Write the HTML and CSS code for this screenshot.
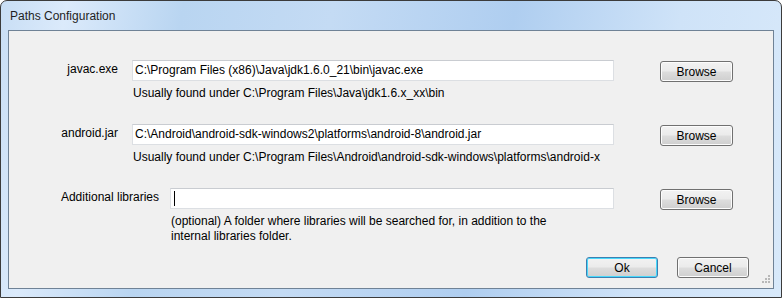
FILE: index.html
```html
<!DOCTYPE html>
<html lang="en">
<head>
    <meta charset="UTF-8">
    <title>Paths Configuration</title>
    <link rel="stylesheet" href="styles.css">
</head>
<body>

<!-- Dialog window -->
<div class="window">
    <div class="titlebar">Paths Configuration</div>

    <div class="client">
        <div class="row first">
            <div class="label">javac.exe</div>
            <div class="field">
                <div class="textbox">C:\Program Files (x86)\Java\jdk1.6.0_21\bin\javac.exe</div>
                <div class="hint">Usually found under C:\Program Files\Java\jdk1.6.x_xx\bin</div>
            </div>
            <button class="btn browse">Browse</button>
        </div>

        <div class="row">
            <div class="label">android.jar</div>
            <div class="field">
                <div class="textbox">C:\Android\android-sdk-windows2\platforms\android-8\android.jar</div>
                <div class="hint">Usually found under C:\Program Files\Android\android-sdk-windows\platforms\android-x</div>
            </div>
            <button class="btn browse">Browse</button>
        </div>

        <div class="row libs">
            <div class="label">Additional libraries</div>
            <div class="field">
                <div class="textbox"><span class="caret"></span></div>
                <div class="hint">(optional) A folder where libraries will be searched for, in addition to the<br>internal libraries folder.</div>
            </div>
            <button class="btn browse">Browse</button>
        </div>

        <div class="actions">
            <button class="btn default">Ok</button>
            <button class="btn">Cancel</button>
        </div>

        <svg class="grip" width="11" height="11" viewBox="0 0 11 11">
            <g fill="#b8b8b8">
                <rect x="8" y="0" width="2" height="2"/>
                <rect x="5" y="3" width="2" height="2"/>
                <rect x="8" y="3" width="2" height="2"/>
                <rect x="2" y="6" width="2" height="2"/>
                <rect x="5" y="6" width="2" height="2"/>
                <rect x="8" y="6" width="2" height="2"/>
            </g>
        </svg>
    </div>
</div>

</body>
</html>
```

FILE: styles.css
```css
/* Page */
body {
    margin: 0;
    background: #ffffff;
    font-family: "Liberation Sans", Arial, sans-serif;
    font-size: 12px;
    color: #000;
}

/* Window frame */
.window {
    width: 782px;
    height: 298px;
    box-sizing: border-box;
    border: 1px solid #3b3b3b;
    border-radius: 7px 7px 0 0;
    background: linear-gradient(100deg, #c8def5 0%, #dbeafb 8%, #b9d5f1 22%, #c4dbf4 40%, #afcef0 62%, #cfe3f8 82%, #d8e9fa 100%);
    padding: 0 7px 7px 7px;
}

.titlebar {
    height: 29px;
    line-height: 30px;
    padding-left: 2px;
    font-size: 12px;
    color: #1e1e1e;
}

.client {
    position: relative;
    height: 259px;
    box-sizing: border-box;
    border: 1px solid #6f8296;
    background: #f0f0f0;
}

/* Form rows */
.row {
    display: flex;
    align-items: flex-start;
    margin-top: 23px;
}

.row.first {
    margin-top: 29px;
}

.label {
    width: 109px;
    margin-right: 14px;
    text-align: right;
    line-height: 15px;
    padding-top: 2px;
}

.row.libs .label {
    width: 150px;
    margin-right: 11px;
}

.field {
    width: 482px;
}

.row.libs .field {
    width: 444px;
}

.textbox {
    height: 21px;
    box-sizing: border-box;
    background: #fff;
    border: 1px solid #dcdfe3;
    border-top-color: #c9ccd1;
    padding: 0 2px;
    line-height: 19px;
    white-space: nowrap;
    overflow: hidden;
}

.caret {
    display: inline-block;
    width: 1px;
    height: 15px;
    margin-left: 1px;
    margin-top: 2px;
    background: #000;
    vertical-align: top;
}

.hint {
    margin-top: 5px;
    padding-left: 1px;
    line-height: 15px;
}

/* Buttons */
.btn {
    width: 73px;
    height: 21px;
    box-sizing: border-box;
    border: 1px solid #707070;
    border-radius: 3px;
    background: linear-gradient(#f2f2f2 0%, #ebebeb 48%, #dddddd 52%, #cfcfcf 100%);
    box-shadow: inset 0 0 0 1px #fcfcfc;
    font-family: "Liberation Sans", Arial, sans-serif;
    font-size: 12px;
    color: #000;
    padding: 0;
    line-height: 18px;
}

.browse {
    margin-left: 46px;
    margin-top: 1px;
}

.btn.default {
    border-color: #3c7fb1;
    box-shadow: inset 0 0 0 1px #48d8fb;
}

.actions {
    display: flex;
    justify-content: flex-end;
    gap: 19px;
    margin-top: 13px;
    padding-right: 24px;
}

.actions .btn {
    width: 72px;
}

.grip {
    position: absolute;
    right: 2px;
    bottom: 2px;
}
```
